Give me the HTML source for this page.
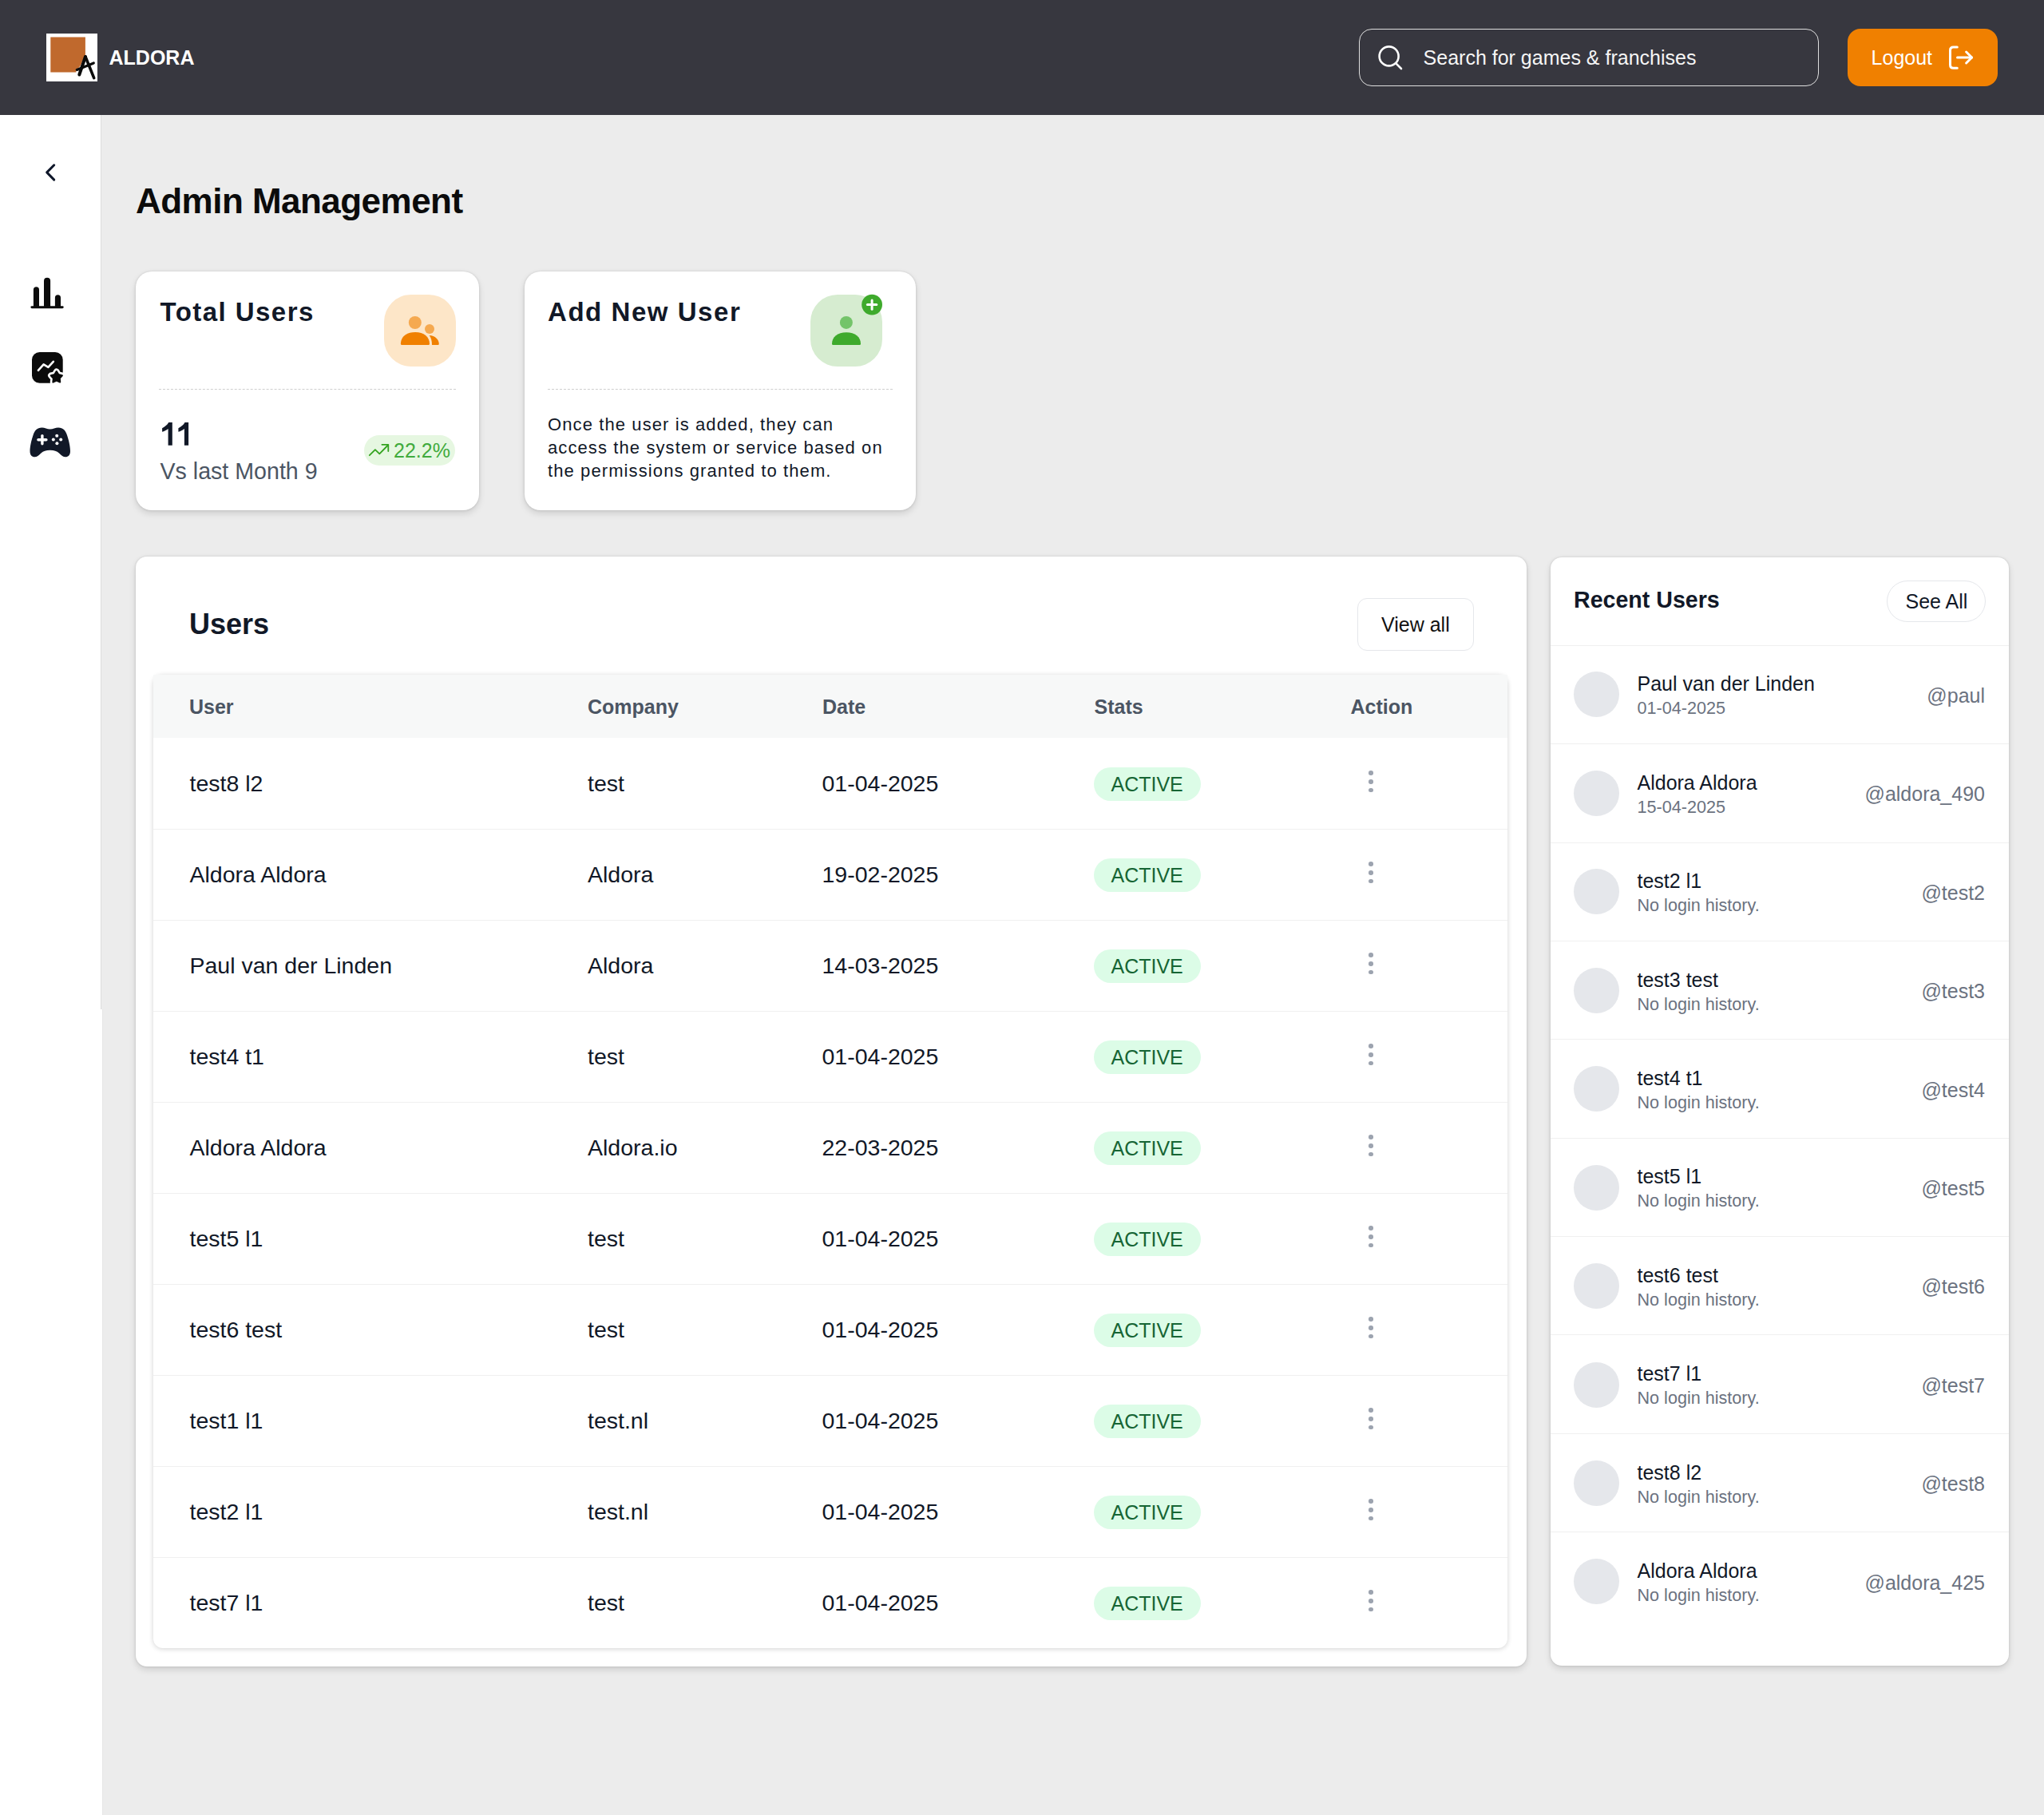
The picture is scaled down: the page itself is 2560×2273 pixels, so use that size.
<!DOCTYPE html>
<html><head><meta charset="utf-8"><title>Admin Management</title>
<style>
html,body{margin:0;padding:0;}
body{width:2560px;height:2273px;position:relative;overflow:hidden;background:#ececec;font-family:'Liberation Sans', sans-serif;}
.t{position:absolute;white-space:nowrap;}
</style></head><body>
<div style="position:absolute;left:0px;top:0px;width:2560px;height:144px;background:#37373f"></div>
<div style="position:absolute;left:58px;top:42px;width:64px;height:60px;background:#fff"></div>
<div class="t" style="left:136.50px;top:56.34px;font-size:25px;line-height:32px;color:#fff;font-weight:700;">ALDORA</div>
<div style="position:absolute;left:1702px;top:36px;width:576px;height:72px;border:1.5px solid #dedede;border-radius:16px;box-sizing:border-box"></div>
<div class="t" style="left:1782.60px;top:56.34px;font-size:25px;line-height:32px;color:#f5f5f5;font-weight:400;">Search for games &amp; franchises</div>
<div style="position:absolute;left:2314px;top:36px;width:188px;height:72px;background:#f08000;border-radius:16px"></div>
<div class="t" style="left:2343.60px;top:56.34px;font-size:25px;line-height:32px;color:#fff;font-weight:400;">Logout</div>
<div style="position:absolute;left:0px;top:144px;width:126px;height:1120px;background:#fff;border-right:1px solid #dcdcdc"></div>
<div style="position:absolute;left:0px;top:1264px;width:128px;height:1009px;background:#fff;border-right:1px solid #e6e6e6"></div>
<div class="t" style="left:170.00px;top:223.25px;font-size:44px;line-height:57px;color:#0b0b0b;font-weight:700;letter-spacing:-0.53px;">Admin Management</div>
<div style="position:absolute;left:170px;top:340px;width:430px;height:299px;background:#fff;border-radius:20px;box-shadow:0 0 3px rgba(0,0,0,0.14),0 4px 8px rgba(0,0,0,0.13)"></div>
<div class="t" style="left:200.50px;top:368.57px;font-size:33px;line-height:43px;color:#111827;font-weight:700;letter-spacing:1.45px;">Total Users</div>
<div style="position:absolute;left:481px;top:369px;width:90px;height:90px;background:#fde6c8;border-radius:34px"></div>
<div style="position:absolute;left:199px;top:487px;width:372px;height:0px;border-top:1.5px dashed #cfcfcf"></div>
<svg style="position:absolute;left:0;top:0" width="300" height="600"><g fill="#111827"><path d="M211.2,529.1 H215.8 V557.8 H210.6 V536.9 C208.5,538.6 205.6,540 203.1,540.8 V536.2 C206.5,534.6 209.6,532.2 211.2,529.1 Z"/><path d="M231.5,529.1 H236.1 V557.8 H230.9 V536.9 C228.8,538.6 225.9,540 223.4,540.8 V536.2 C226.8,534.6 229.9,532.2 231.5,529.1 Z"/></g></svg>
<div class="t" style="left:200.50px;top:571.59px;font-size:28.6px;line-height:37px;color:#4b5563;font-weight:400;">Vs last Month 9</div>
<div style="position:absolute;left:456px;top:545px;width:114px;height:38px;background:#e6f7e1;border-radius:19px"></div>
<div class="t" style="left:493.00px;top:547.54px;font-size:25px;line-height:32px;color:#41ab3d;font-weight:400;">22.2%</div>
<div style="position:absolute;left:657px;top:340px;width:490px;height:299px;background:#fff;border-radius:20px;box-shadow:0 0 3px rgba(0,0,0,0.14),0 4px 8px rgba(0,0,0,0.13)"></div>
<div class="t" style="left:686.00px;top:368.77px;font-size:33px;line-height:43px;color:#111827;font-weight:700;letter-spacing:1.55px;">Add New User</div>
<div style="position:absolute;left:1015px;top:369px;width:90px;height:90px;background:#d6ecd0;border-radius:34px"></div>
<div style="position:absolute;left:686px;top:487px;width:432px;height:0px;border-top:1.5px dashed #cfcfcf"></div>
<div class="t" style="left:686.00px;top:516.68px;font-size:22px;line-height:29px;color:#111827;font-weight:400;letter-spacing:1.1px;">Once the user is added, they can</div>
<div class="t" style="left:686.00px;top:545.78px;font-size:22px;line-height:29px;color:#111827;font-weight:400;letter-spacing:1.1px;">access the system or service based on</div>
<div class="t" style="left:686.00px;top:574.88px;font-size:22px;line-height:29px;color:#111827;font-weight:400;letter-spacing:1.1px;">the permissions granted to them.</div>
<div style="position:absolute;left:170px;top:697px;width:1742px;height:1390px;background:#fff;border-radius:14px;box-shadow:0 0 3px rgba(0,0,0,0.14),0 4px 8px rgba(0,0,0,0.13)"></div>
<div class="t" style="left:237.00px;top:757.63px;font-size:36px;line-height:47px;color:#111827;font-weight:700;">Users</div>
<div style="position:absolute;left:1700px;top:749px;width:146px;height:66px;border:1.5px solid #e5e7eb;border-radius:12px;box-sizing:border-box"></div>
<div class="t" style="left:1730.00px;top:766.14px;font-size:25px;line-height:32px;color:#111;font-weight:400;">View all</div>
<div style="position:absolute;left:192px;top:845px;width:1696px;height:1219px;background:#fff;border-radius:12px;box-shadow:0 1px 6px rgba(0,0,0,0.18)"></div>
<div style="position:absolute;left:192px;top:845px;width:1696px;height:79px;background:#f7f8f8"></div>
<div class="t" style="left:237.00px;top:868.94px;font-size:25px;line-height:32px;color:#4b5563;font-weight:700;">User</div>
<div class="t" style="left:736.00px;top:868.94px;font-size:25px;line-height:32px;color:#4b5563;font-weight:700;">Company</div>
<div class="t" style="left:1030.00px;top:868.94px;font-size:25px;line-height:32px;color:#4b5563;font-weight:700;">Date</div>
<div class="t" style="left:1370.50px;top:868.94px;font-size:25px;line-height:32px;color:#4b5563;font-weight:700;">Stats</div>
<div class="t" style="left:1691.50px;top:868.94px;font-size:25px;line-height:32px;color:#4b5563;font-weight:700;">Action</div>
<div class="t" style="left:237.50px;top:962.62px;font-size:28.5px;line-height:37px;color:#111827;font-weight:400;">test8 l2</div>
<div class="t" style="left:736.00px;top:962.62px;font-size:28.5px;line-height:37px;color:#111827;font-weight:400;">test</div>
<div class="t" style="left:1029.50px;top:962.62px;font-size:28.5px;line-height:37px;color:#111827;font-weight:400;">01-04-2025</div>
<div style="position:absolute;left:1370px;top:961px;width:134px;height:42px;background:#dcfce7;border-radius:21px"></div>
<div class="t" style="left:1391.50px;top:966.34px;font-size:25px;line-height:32px;color:#166534;font-weight:400;">ACTIVE</div>
<div style="position:absolute;left:1714.30px;top:965.40px;width:5.6px;height:5.6px;border-radius:50%;background:#9ca3af"></div>
<div style="position:absolute;left:1714.30px;top:976.00px;width:5.6px;height:5.6px;border-radius:50%;background:#9ca3af"></div>
<div style="position:absolute;left:1714.30px;top:986.60px;width:5.6px;height:5.6px;border-radius:50%;background:#9ca3af"></div>
<div style="position:absolute;left:192px;top:1038px;width:1696px;height:1px;background:#f0f0f0"></div>
<div class="t" style="left:237.50px;top:1076.62px;font-size:28.5px;line-height:37px;color:#111827;font-weight:400;">Aldora Aldora</div>
<div class="t" style="left:736.00px;top:1076.62px;font-size:28.5px;line-height:37px;color:#111827;font-weight:400;">Aldora</div>
<div class="t" style="left:1029.50px;top:1076.62px;font-size:28.5px;line-height:37px;color:#111827;font-weight:400;">19-02-2025</div>
<div style="position:absolute;left:1370px;top:1075px;width:134px;height:42px;background:#dcfce7;border-radius:21px"></div>
<div class="t" style="left:1391.50px;top:1080.34px;font-size:25px;line-height:32px;color:#166534;font-weight:400;">ACTIVE</div>
<div style="position:absolute;left:1714.30px;top:1079.40px;width:5.6px;height:5.6px;border-radius:50%;background:#9ca3af"></div>
<div style="position:absolute;left:1714.30px;top:1090.00px;width:5.6px;height:5.6px;border-radius:50%;background:#9ca3af"></div>
<div style="position:absolute;left:1714.30px;top:1100.60px;width:5.6px;height:5.6px;border-radius:50%;background:#9ca3af"></div>
<div style="position:absolute;left:192px;top:1152px;width:1696px;height:1px;background:#f0f0f0"></div>
<div class="t" style="left:237.50px;top:1190.62px;font-size:28.5px;line-height:37px;color:#111827;font-weight:400;">Paul van der Linden</div>
<div class="t" style="left:736.00px;top:1190.62px;font-size:28.5px;line-height:37px;color:#111827;font-weight:400;">Aldora</div>
<div class="t" style="left:1029.50px;top:1190.62px;font-size:28.5px;line-height:37px;color:#111827;font-weight:400;">14-03-2025</div>
<div style="position:absolute;left:1370px;top:1189px;width:134px;height:42px;background:#dcfce7;border-radius:21px"></div>
<div class="t" style="left:1391.50px;top:1194.34px;font-size:25px;line-height:32px;color:#166534;font-weight:400;">ACTIVE</div>
<div style="position:absolute;left:1714.30px;top:1193.40px;width:5.6px;height:5.6px;border-radius:50%;background:#9ca3af"></div>
<div style="position:absolute;left:1714.30px;top:1204.00px;width:5.6px;height:5.6px;border-radius:50%;background:#9ca3af"></div>
<div style="position:absolute;left:1714.30px;top:1214.60px;width:5.6px;height:5.6px;border-radius:50%;background:#9ca3af"></div>
<div style="position:absolute;left:192px;top:1266px;width:1696px;height:1px;background:#f0f0f0"></div>
<div class="t" style="left:237.50px;top:1304.62px;font-size:28.5px;line-height:37px;color:#111827;font-weight:400;">test4 t1</div>
<div class="t" style="left:736.00px;top:1304.62px;font-size:28.5px;line-height:37px;color:#111827;font-weight:400;">test</div>
<div class="t" style="left:1029.50px;top:1304.62px;font-size:28.5px;line-height:37px;color:#111827;font-weight:400;">01-04-2025</div>
<div style="position:absolute;left:1370px;top:1303px;width:134px;height:42px;background:#dcfce7;border-radius:21px"></div>
<div class="t" style="left:1391.50px;top:1308.34px;font-size:25px;line-height:32px;color:#166534;font-weight:400;">ACTIVE</div>
<div style="position:absolute;left:1714.30px;top:1307.40px;width:5.6px;height:5.6px;border-radius:50%;background:#9ca3af"></div>
<div style="position:absolute;left:1714.30px;top:1318.00px;width:5.6px;height:5.6px;border-radius:50%;background:#9ca3af"></div>
<div style="position:absolute;left:1714.30px;top:1328.60px;width:5.6px;height:5.6px;border-radius:50%;background:#9ca3af"></div>
<div style="position:absolute;left:192px;top:1380px;width:1696px;height:1px;background:#f0f0f0"></div>
<div class="t" style="left:237.50px;top:1418.62px;font-size:28.5px;line-height:37px;color:#111827;font-weight:400;">Aldora Aldora</div>
<div class="t" style="left:736.00px;top:1418.62px;font-size:28.5px;line-height:37px;color:#111827;font-weight:400;">Aldora.io</div>
<div class="t" style="left:1029.50px;top:1418.62px;font-size:28.5px;line-height:37px;color:#111827;font-weight:400;">22-03-2025</div>
<div style="position:absolute;left:1370px;top:1417px;width:134px;height:42px;background:#dcfce7;border-radius:21px"></div>
<div class="t" style="left:1391.50px;top:1422.34px;font-size:25px;line-height:32px;color:#166534;font-weight:400;">ACTIVE</div>
<div style="position:absolute;left:1714.30px;top:1421.40px;width:5.6px;height:5.6px;border-radius:50%;background:#9ca3af"></div>
<div style="position:absolute;left:1714.30px;top:1432.00px;width:5.6px;height:5.6px;border-radius:50%;background:#9ca3af"></div>
<div style="position:absolute;left:1714.30px;top:1442.60px;width:5.6px;height:5.6px;border-radius:50%;background:#9ca3af"></div>
<div style="position:absolute;left:192px;top:1494px;width:1696px;height:1px;background:#f0f0f0"></div>
<div class="t" style="left:237.50px;top:1532.62px;font-size:28.5px;line-height:37px;color:#111827;font-weight:400;">test5 l1</div>
<div class="t" style="left:736.00px;top:1532.62px;font-size:28.5px;line-height:37px;color:#111827;font-weight:400;">test</div>
<div class="t" style="left:1029.50px;top:1532.62px;font-size:28.5px;line-height:37px;color:#111827;font-weight:400;">01-04-2025</div>
<div style="position:absolute;left:1370px;top:1531px;width:134px;height:42px;background:#dcfce7;border-radius:21px"></div>
<div class="t" style="left:1391.50px;top:1536.34px;font-size:25px;line-height:32px;color:#166534;font-weight:400;">ACTIVE</div>
<div style="position:absolute;left:1714.30px;top:1535.40px;width:5.6px;height:5.6px;border-radius:50%;background:#9ca3af"></div>
<div style="position:absolute;left:1714.30px;top:1546.00px;width:5.6px;height:5.6px;border-radius:50%;background:#9ca3af"></div>
<div style="position:absolute;left:1714.30px;top:1556.60px;width:5.6px;height:5.6px;border-radius:50%;background:#9ca3af"></div>
<div style="position:absolute;left:192px;top:1608px;width:1696px;height:1px;background:#f0f0f0"></div>
<div class="t" style="left:237.50px;top:1646.62px;font-size:28.5px;line-height:37px;color:#111827;font-weight:400;">test6 test</div>
<div class="t" style="left:736.00px;top:1646.62px;font-size:28.5px;line-height:37px;color:#111827;font-weight:400;">test</div>
<div class="t" style="left:1029.50px;top:1646.62px;font-size:28.5px;line-height:37px;color:#111827;font-weight:400;">01-04-2025</div>
<div style="position:absolute;left:1370px;top:1645px;width:134px;height:42px;background:#dcfce7;border-radius:21px"></div>
<div class="t" style="left:1391.50px;top:1650.34px;font-size:25px;line-height:32px;color:#166534;font-weight:400;">ACTIVE</div>
<div style="position:absolute;left:1714.30px;top:1649.40px;width:5.6px;height:5.6px;border-radius:50%;background:#9ca3af"></div>
<div style="position:absolute;left:1714.30px;top:1660.00px;width:5.6px;height:5.6px;border-radius:50%;background:#9ca3af"></div>
<div style="position:absolute;left:1714.30px;top:1670.60px;width:5.6px;height:5.6px;border-radius:50%;background:#9ca3af"></div>
<div style="position:absolute;left:192px;top:1722px;width:1696px;height:1px;background:#f0f0f0"></div>
<div class="t" style="left:237.50px;top:1760.62px;font-size:28.5px;line-height:37px;color:#111827;font-weight:400;">test1 l1</div>
<div class="t" style="left:736.00px;top:1760.62px;font-size:28.5px;line-height:37px;color:#111827;font-weight:400;">test.nl</div>
<div class="t" style="left:1029.50px;top:1760.62px;font-size:28.5px;line-height:37px;color:#111827;font-weight:400;">01-04-2025</div>
<div style="position:absolute;left:1370px;top:1759px;width:134px;height:42px;background:#dcfce7;border-radius:21px"></div>
<div class="t" style="left:1391.50px;top:1764.34px;font-size:25px;line-height:32px;color:#166534;font-weight:400;">ACTIVE</div>
<div style="position:absolute;left:1714.30px;top:1763.40px;width:5.6px;height:5.6px;border-radius:50%;background:#9ca3af"></div>
<div style="position:absolute;left:1714.30px;top:1774.00px;width:5.6px;height:5.6px;border-radius:50%;background:#9ca3af"></div>
<div style="position:absolute;left:1714.30px;top:1784.60px;width:5.6px;height:5.6px;border-radius:50%;background:#9ca3af"></div>
<div style="position:absolute;left:192px;top:1836px;width:1696px;height:1px;background:#f0f0f0"></div>
<div class="t" style="left:237.50px;top:1874.62px;font-size:28.5px;line-height:37px;color:#111827;font-weight:400;">test2 l1</div>
<div class="t" style="left:736.00px;top:1874.62px;font-size:28.5px;line-height:37px;color:#111827;font-weight:400;">test.nl</div>
<div class="t" style="left:1029.50px;top:1874.62px;font-size:28.5px;line-height:37px;color:#111827;font-weight:400;">01-04-2025</div>
<div style="position:absolute;left:1370px;top:1873px;width:134px;height:42px;background:#dcfce7;border-radius:21px"></div>
<div class="t" style="left:1391.50px;top:1878.34px;font-size:25px;line-height:32px;color:#166534;font-weight:400;">ACTIVE</div>
<div style="position:absolute;left:1714.30px;top:1877.40px;width:5.6px;height:5.6px;border-radius:50%;background:#9ca3af"></div>
<div style="position:absolute;left:1714.30px;top:1888.00px;width:5.6px;height:5.6px;border-radius:50%;background:#9ca3af"></div>
<div style="position:absolute;left:1714.30px;top:1898.60px;width:5.6px;height:5.6px;border-radius:50%;background:#9ca3af"></div>
<div style="position:absolute;left:192px;top:1950px;width:1696px;height:1px;background:#f0f0f0"></div>
<div class="t" style="left:237.50px;top:1988.62px;font-size:28.5px;line-height:37px;color:#111827;font-weight:400;">test7 l1</div>
<div class="t" style="left:736.00px;top:1988.62px;font-size:28.5px;line-height:37px;color:#111827;font-weight:400;">test</div>
<div class="t" style="left:1029.50px;top:1988.62px;font-size:28.5px;line-height:37px;color:#111827;font-weight:400;">01-04-2025</div>
<div style="position:absolute;left:1370px;top:1987px;width:134px;height:42px;background:#dcfce7;border-radius:21px"></div>
<div class="t" style="left:1391.50px;top:1992.34px;font-size:25px;line-height:32px;color:#166534;font-weight:400;">ACTIVE</div>
<div style="position:absolute;left:1714.30px;top:1991.40px;width:5.6px;height:5.6px;border-radius:50%;background:#9ca3af"></div>
<div style="position:absolute;left:1714.30px;top:2002.00px;width:5.6px;height:5.6px;border-radius:50%;background:#9ca3af"></div>
<div style="position:absolute;left:1714.30px;top:2012.60px;width:5.6px;height:5.6px;border-radius:50%;background:#9ca3af"></div>
<div style="position:absolute;left:1942px;top:698px;width:574px;height:1388px;background:#fff;border-radius:14px;box-shadow:0 0 3px rgba(0,0,0,0.14),0 4px 8px rgba(0,0,0,0.13)"></div>
<div class="t" style="left:1971.00px;top:732.99px;font-size:28.6px;line-height:37px;color:#111827;font-weight:700;">Recent Users</div>
<div style="position:absolute;left:2363px;top:727px;width:124px;height:52px;border:1.5px solid #e5e7eb;border-radius:26px;box-sizing:border-box"></div>
<div class="t" style="left:2386.50px;top:737.24px;font-size:25px;line-height:32px;color:#111827;font-weight:400;">See All</div>
<div style="position:absolute;left:1942px;top:808px;width:574px;height:1px;background:#f0f0f0"></div>
<div style="position:absolute;left:1971px;top:841.40px;width:57px;height:57px;border-radius:50%;background:#e5e7eb"></div>
<div class="t" style="left:2050.50px;top:840.24px;font-size:25px;line-height:32px;color:#111827;font-weight:400;">Paul van der Linden</div>
<div class="t" style="left:2050.50px;top:873.22px;font-size:21.6px;line-height:28px;color:#6b7280;font-weight:400;">01-04-2025</div>
<div class="t" style="right:74.00px;top:854.74px;font-size:25px;line-height:32px;color:#6b7280;font-weight:400;">@paul</div>
<div style="position:absolute;left:1942px;top:931px;width:574px;height:1px;background:#f0f0f0"></div>
<div style="position:absolute;left:1971px;top:964.85px;width:57px;height:57px;border-radius:50%;background:#e5e7eb"></div>
<div class="t" style="left:2050.50px;top:963.69px;font-size:25px;line-height:32px;color:#111827;font-weight:400;">Aldora Aldora</div>
<div class="t" style="left:2050.50px;top:996.67px;font-size:21.6px;line-height:28px;color:#6b7280;font-weight:400;">15-04-2025</div>
<div class="t" style="right:74.00px;top:978.19px;font-size:25px;line-height:32px;color:#6b7280;font-weight:400;">@aldora_490</div>
<div style="position:absolute;left:1942px;top:1055px;width:574px;height:1px;background:#f0f0f0"></div>
<div style="position:absolute;left:1971px;top:1088.30px;width:57px;height:57px;border-radius:50%;background:#e5e7eb"></div>
<div class="t" style="left:2050.50px;top:1087.14px;font-size:25px;line-height:32px;color:#111827;font-weight:400;">test2 l1</div>
<div class="t" style="left:2050.50px;top:1120.12px;font-size:21.6px;line-height:28px;color:#6b7280;font-weight:400;">No login history.</div>
<div class="t" style="right:74.00px;top:1101.64px;font-size:25px;line-height:32px;color:#6b7280;font-weight:400;">@test2</div>
<div style="position:absolute;left:1942px;top:1178px;width:574px;height:1px;background:#f0f0f0"></div>
<div style="position:absolute;left:1971px;top:1211.75px;width:57px;height:57px;border-radius:50%;background:#e5e7eb"></div>
<div class="t" style="left:2050.50px;top:1210.59px;font-size:25px;line-height:32px;color:#111827;font-weight:400;">test3 test</div>
<div class="t" style="left:2050.50px;top:1243.57px;font-size:21.6px;line-height:28px;color:#6b7280;font-weight:400;">No login history.</div>
<div class="t" style="right:74.00px;top:1225.09px;font-size:25px;line-height:32px;color:#6b7280;font-weight:400;">@test3</div>
<div style="position:absolute;left:1942px;top:1301px;width:574px;height:1px;background:#f0f0f0"></div>
<div style="position:absolute;left:1971px;top:1335.20px;width:57px;height:57px;border-radius:50%;background:#e5e7eb"></div>
<div class="t" style="left:2050.50px;top:1334.04px;font-size:25px;line-height:32px;color:#111827;font-weight:400;">test4 t1</div>
<div class="t" style="left:2050.50px;top:1367.02px;font-size:21.6px;line-height:28px;color:#6b7280;font-weight:400;">No login history.</div>
<div class="t" style="right:74.00px;top:1348.54px;font-size:25px;line-height:32px;color:#6b7280;font-weight:400;">@test4</div>
<div style="position:absolute;left:1942px;top:1425px;width:574px;height:1px;background:#f0f0f0"></div>
<div style="position:absolute;left:1971px;top:1458.65px;width:57px;height:57px;border-radius:50%;background:#e5e7eb"></div>
<div class="t" style="left:2050.50px;top:1457.49px;font-size:25px;line-height:32px;color:#111827;font-weight:400;">test5 l1</div>
<div class="t" style="left:2050.50px;top:1490.47px;font-size:21.6px;line-height:28px;color:#6b7280;font-weight:400;">No login history.</div>
<div class="t" style="right:74.00px;top:1471.99px;font-size:25px;line-height:32px;color:#6b7280;font-weight:400;">@test5</div>
<div style="position:absolute;left:1942px;top:1548px;width:574px;height:1px;background:#f0f0f0"></div>
<div style="position:absolute;left:1971px;top:1582.10px;width:57px;height:57px;border-radius:50%;background:#e5e7eb"></div>
<div class="t" style="left:2050.50px;top:1580.94px;font-size:25px;line-height:32px;color:#111827;font-weight:400;">test6 test</div>
<div class="t" style="left:2050.50px;top:1613.92px;font-size:21.6px;line-height:28px;color:#6b7280;font-weight:400;">No login history.</div>
<div class="t" style="right:74.00px;top:1595.44px;font-size:25px;line-height:32px;color:#6b7280;font-weight:400;">@test6</div>
<div style="position:absolute;left:1942px;top:1671px;width:574px;height:1px;background:#f0f0f0"></div>
<div style="position:absolute;left:1971px;top:1705.55px;width:57px;height:57px;border-radius:50%;background:#e5e7eb"></div>
<div class="t" style="left:2050.50px;top:1704.39px;font-size:25px;line-height:32px;color:#111827;font-weight:400;">test7 l1</div>
<div class="t" style="left:2050.50px;top:1737.37px;font-size:21.6px;line-height:28px;color:#6b7280;font-weight:400;">No login history.</div>
<div class="t" style="right:74.00px;top:1718.89px;font-size:25px;line-height:32px;color:#6b7280;font-weight:400;">@test7</div>
<div style="position:absolute;left:1942px;top:1795px;width:574px;height:1px;background:#f0f0f0"></div>
<div style="position:absolute;left:1971px;top:1829.00px;width:57px;height:57px;border-radius:50%;background:#e5e7eb"></div>
<div class="t" style="left:2050.50px;top:1827.84px;font-size:25px;line-height:32px;color:#111827;font-weight:400;">test8 l2</div>
<div class="t" style="left:2050.50px;top:1860.82px;font-size:21.6px;line-height:28px;color:#6b7280;font-weight:400;">No login history.</div>
<div class="t" style="right:74.00px;top:1842.34px;font-size:25px;line-height:32px;color:#6b7280;font-weight:400;">@test8</div>
<div style="position:absolute;left:1942px;top:1918px;width:574px;height:1px;background:#f0f0f0"></div>
<div style="position:absolute;left:1971px;top:1952.45px;width:57px;height:57px;border-radius:50%;background:#e5e7eb"></div>
<div class="t" style="left:2050.50px;top:1951.29px;font-size:25px;line-height:32px;color:#111827;font-weight:400;">Aldora Aldora</div>
<div class="t" style="left:2050.50px;top:1984.27px;font-size:21.6px;line-height:28px;color:#6b7280;font-weight:400;">No login history.</div>
<div class="t" style="right:74.00px;top:1965.79px;font-size:25px;line-height:32px;color:#6b7280;font-weight:400;">@aldora_425</div>
<svg style="position:absolute;left:0;top:0" width="2560" height="2273" viewBox="0 0 2560 2273">
<!-- logo -->
<path d="M63.3,46.4 H106.9 V69.9 C105,72.5 103.6,75.5 102.4,78.5 C101.2,81.5 99.5,85.2 95.8,86.6 L95.3,90.4 H63.3 Z" fill="#c0692d"/>
<g stroke="#0a0a0a" stroke-width="3.6" stroke-linecap="round" fill="none">
<path d="M99.3,93.5 L107,71" stroke-width="4"/><path d="M107,71 L117.7,97.6"/><path d="M96.3,87.4 L117.3,78.9" stroke-width="3.2"/>
</g>
<!-- search icon -->
<g stroke="#fff" stroke-width="2.6" fill="none" stroke-linecap="round">
<circle cx="1739.6" cy="70.4" r="12"/><path d="M1748.6,79.6 L1755,86"/>
</g>
<!-- logout icon -->
<g stroke="#fff" stroke-width="3" fill="none" stroke-linecap="round" stroke-linejoin="round">
<path d="M2451.3,58.9 H2446.5 Q2442.5,58.9 2442.5,62.9 V81.2 Q2442.5,85.2 2446.5,85.2 H2451.3"/>
<path d="M2451.5,72 H2469.5"/><path d="M2462.6,65 L2469.6,72 L2462.6,79"/>
</g>
<!-- chevron -->
<path d="M67.7,206.8 L58.7,215.9 L67.7,225.1" stroke="#0f172a" stroke-width="3" fill="none" stroke-linecap="round" stroke-linejoin="round"/>
<!-- bar chart -->
<g fill="#0c0c0c">
<path d="M41.9,384 V362.9 A3.55,3.55 0 0 1 49,362.9 V384 Z"/>
<path d="M55,384 V351.7 A4.05,4.05 0 0 1 63.1,351.7 V384 Z"/>
<path d="M68.9,384 V372.7 A3.55,3.55 0 0 1 76,372.7 V384 Z"/>
<rect x="38.4" y="383.3" width="41.3" height="2.9" rx="1.45"/>
</g>
<!-- chart star -->
<rect x="40" y="441" width="38.7" height="38.8" rx="9.6" fill="#0b0b0b"/>
<path d="M47.9,463.8 L54.6,456.4 L60.4,459.9 L66.8,452.8" stroke="#fff" stroke-width="2.6" fill="none" stroke-linecap="round" stroke-linejoin="round"/>
<path d="M70.80,465.10 L73.21,469.18 L77.84,470.21 L74.70,473.77 L75.15,478.49 L70.80,476.60 L66.45,478.49 L66.90,473.77 L63.76,470.21 L68.39,469.18 Z" fill="#fff" stroke="#fff" stroke-width="7.4" stroke-linejoin="round"/><path d="M70.80,465.10 L73.21,469.18 L77.84,470.21 L74.70,473.77 L75.15,478.49 L70.80,476.60 L66.45,478.49 L66.90,473.77 L63.76,470.21 L68.39,469.18 Z" fill="#0b0b0b" stroke="#0b0b0b" stroke-width="2.2" stroke-linejoin="round"/>
<!-- controller -->
<path d="M52.5,535.5 C56,535.5 59,537.5 62.7,537.5 C66.4,537.5 69.4,535.5 73,535.5 C79,535.5 82,539 84,545 C86.5,552 88,560 88,565 C88,570 85.5,572.3 82,572.3 C79,572.3 77,570.5 74,567.5 C71,565 68,563.8 62.7,563.8 C57.4,563.8 54.4,565 51.4,567.5 C48.4,570.5 46.4,572.3 43.4,572.3 C39.9,572.3 37.5,570 37.5,565 C37.5,560 39,552 41.5,545 C43.5,539 46.5,535.5 52.5,535.5 Z" fill="#111827"/>
<g stroke="#fff" stroke-width="3.4" stroke-linecap="round"><path d="M47.9,550.7 H57.9"/><path d="M52.9,545.6 V555.8"/></g>
<g fill="#fff"><circle cx="71.2" cy="545.8" r="2"/><circle cx="66.8" cy="550.5" r="2"/><circle cx="76.2" cy="550.5" r="2"/><circle cx="71.4" cy="555.3" r="2"/></g>
<!-- users icon -->
<g fill="#f08000">
<circle cx="519.8" cy="404" r="8" fill-opacity="0.6"/><circle cx="538" cy="411.9" r="6" fill-opacity="0.6"/>
<path d="M503.4,432 Q501.9,432 501.9,430.5 C502,422 509,416 520,416 C531,416 538,422 538,430.5 Q538,432 536.5,432 Z"/>
<path d="M541,432 H548.5 Q549.8,432 549.8,430.7 C549.8,425 545,420.3 537.7,419.9 C540,423 541,427 541,432 Z"/>
</g>
<!-- add user icon -->
<circle cx="1059.9" cy="403.9" r="8" fill="#74c46a"/>
<path d="M1043.5,432 Q1042,432 1042,430.5 C1042,422 1049,416.3 1060,416.3 C1071,416.3 1078,422 1078,430.5 Q1078,432 1076.5,432 Z" fill="#3eaa2c"/>
<circle cx="1092.1" cy="381.6" r="12.9" fill="#3eaa2c"/>
<g stroke="#fff" stroke-width="3" stroke-linecap="round"><path d="M1086.4,381.6 H1097.8"/><path d="M1092.1,375.9 V387.3"/></g>
<!-- trend arrow -->
<g stroke="#33a31f" stroke-width="1.8" fill="none" stroke-linecap="round" stroke-linejoin="round">
<path d="M462.8,570.2 L469.9,563.1 L475.3,568.4 L485.9,557.5"/><path d="M478.4,556.8 H486.3 V565"/>
</g>
</svg>
</body></html>
